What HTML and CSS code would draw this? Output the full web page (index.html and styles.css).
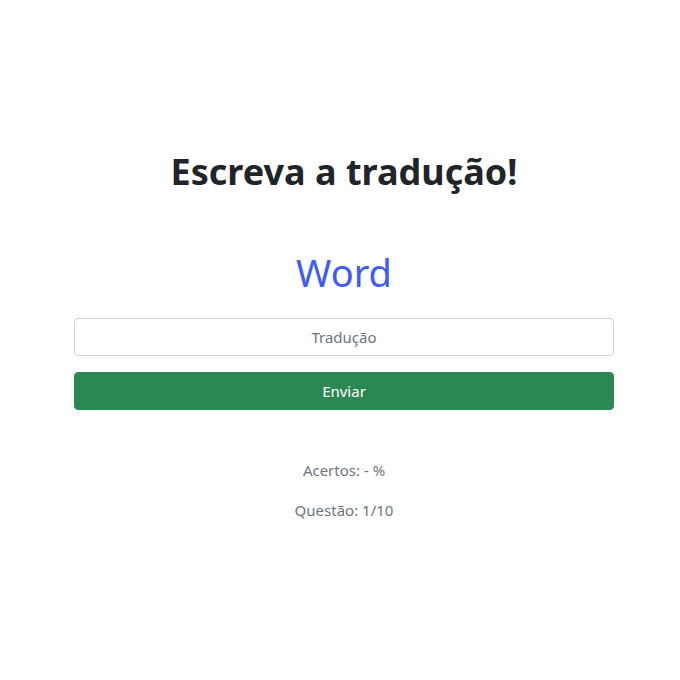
FILE: index.html
```html
<!DOCTYPE html>
<html lang="pt">
<head>
<meta charset="utf-8">
<link rel="stylesheet" href="styles.css">
<title>Tradução</title>
</head>
<body>
<main class="page">
  <h1 class="title">Escreva a tradução!</h1>
  <div class="word">Word</div>
  <form class="form">
    <input class="input" type="text" placeholder="Tradução">
    <button class="btn" type="button">Enviar</button>
  </form>
  <p class="stat stat-first">Acertos: - %</p>
  <p class="stat">Questão: 1/10</p>
</main>
</body>
</html>
```
FILE: styles.css
```css
* { box-sizing: border-box; }
html, body { margin: 0; padding: 0; background: #fff; }
body {
  font-family: "Noto Sans", "Open Sans", sans-serif;
  color: #212529;
  font-size: 16px;
}
.page {
  width: 540px;
  margin-left: 74px;
  padding-top: 145px;
  display: flex;
  flex-direction: column;
  align-items: stretch;
  text-align: center;
}
.title {
  margin: 0;
  font-size: 36px;
  font-weight: 700;
  line-height: 54px;
  color: #212529;
}
.word {
  margin-top: 46px;
  font-size: 38px;
  line-height: 54px;
  color: #3d5afe;
}
.form {
  margin-top: 19px;
  display: flex;
  flex-direction: column;
  gap: 16px;
}
.input {
  height: 38px;
  border: 1px solid #ced4da;
  border-radius: 4px;
  text-align: center;
  font-family: inherit;
  font-size: 15px;
  color: #212529;
}
.input::placeholder { color: #6c757d; }
.btn {
  height: 38px;
  border: 1px solid #2c8853;
  border-radius: 4px;
  background: #2c8853;
  color: #fff;
  font-family: inherit;
  font-size: 15px;
}
.stat {
  margin: 18px 0 0;
  color: #6c757d;
  font-size: 15px;
  line-height: 22px;
}
.stat-first { margin-top: 49px; }
```
